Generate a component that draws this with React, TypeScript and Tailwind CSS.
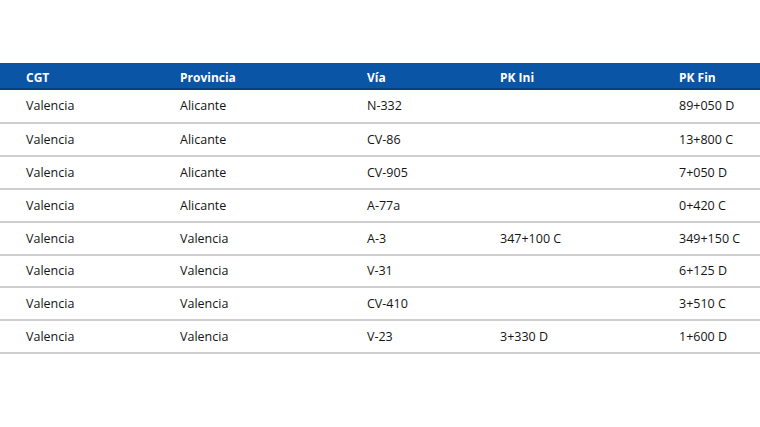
import React from "react";

const rows = [
  ["Valencia", "Alicante", "N-332", "", "89+050 D"],
  ["Valencia", "Alicante", "CV-86", "", "13+800 C"],
  ["Valencia", "Alicante", "CV-905", "", "7+050 D"],
  ["Valencia", "Alicante", "A-77a", "", "0+420 C"],
  ["Valencia", "Valencia", "A-3", "347+100 C", "349+150 C"],
  ["Valencia", "Valencia", "V-31", "", "6+125 D"],
  ["Valencia", "Valencia", "CV-410", "", "3+510 C"],
  ["Valencia", "Valencia", "V-23", "3+330 D", "1+600 D"],
];

const heights = [
  "h-[34px]",
  "h-[33px]",
  "h-[33px]",
  "h-[33px]",
  "h-[33px]",
  "h-[32px]",
  "h-[33px]",
  "h-[33px]",
];

const cols = "grid grid-cols-[154px_187px_133px_179px_1fr] pl-[26px] items-center";

export default function App() {
  return (
    <div
      className="w-[760px] h-[427px] bg-white pt-[63px] text-[12.5px] text-[#141414]"
      style={{ fontFamily: '"Open Sans", "Noto Sans", sans-serif' }}
    >
      <div className={`${cols} h-[27px] pt-[4px] bg-[#0a55a6] border-b-2 border-[#063f7e] text-white text-[12px] font-bold box-border`}>
        <div>CGT</div>
        <div>Provincia</div>
        <div>Vía</div>
        <div>PK Ini</div>
        <div>PK Fin</div>
      </div>
      {rows.map((r, i) => (
        <div key={i} className={`${cols} ${heights[i]} pt-[1px] border-b-2 border-[#cfcfcf] box-border`}>
          {r.map((c, j) => (
            <div key={j}>{c}</div>
          ))}
        </div>
      ))}
    </div>
  );
}
